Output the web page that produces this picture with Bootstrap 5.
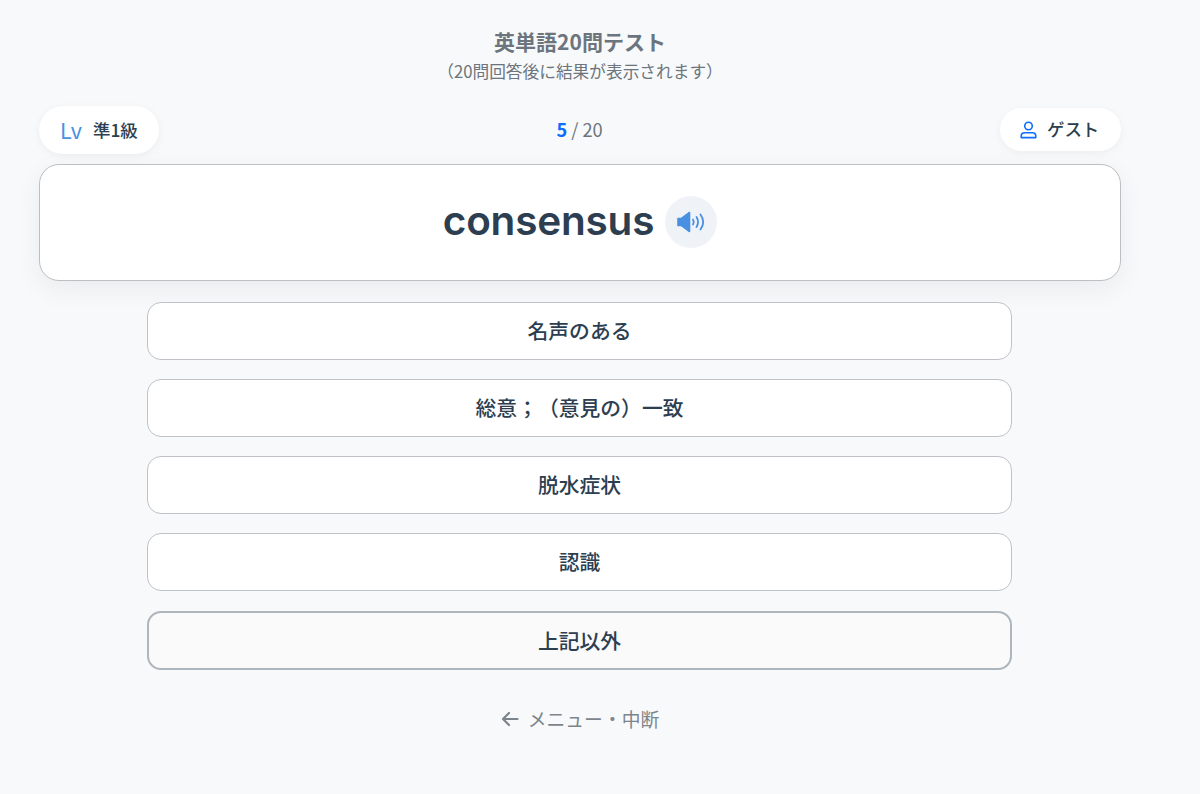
<!DOCTYPE html>
<html lang="ja">
<head>
    <meta charset="utf-8">
    <title>英単語20問テスト</title>
    <link href="https://cdn.jsdelivr.net/npm/bootstrap@5.3.0/dist/css/bootstrap.min.css" rel="stylesheet">
    <style>
        body {
            background: #f8f9fb;
            font-family: "Noto Sans CJK JP", "Noto Sans", sans-serif;
            text-spacing-trim: space-all;
            overflow: hidden;
        }
        .quiz-page { width: 1160px; padding: 27px 39px 0; }
        .quiz-title { font-size: 21px; font-weight: 700; color: #6c757d; line-height: 29px; margin: 0; }
        .quiz-sub { font-size: 16.700px; color: #6c757d; line-height: 22px; margin-top: 4px; }
        .status-row { margin-top: 24px; height: 48px; }
        .pill {
            background: #fff;
            border-radius: 24px;
            box-shadow: 0 2px 8px rgba(0, 0, 0, .05);
            color: #2c3e50;
            font-size: 17.4px;
            font-weight: 500;
        }
        .pill-level { width: 120px; height: 48px; padding-left: 21px; }
        .pill-level .lv { color: #4a90e2; font-size: 21.500px; font-weight: 400; margin-right: 11px; }
        .pill-user { width: 121px; height: 43px; padding-left: 20px; margin-top: 2px; }
        .pill-user svg { margin-right: 10px; }
        .counter { font-size: 18.2px; color: #6c757d; line-height: 46px; }
        .counter b { color: #0d6efd; font-weight: 700; }
        .word-card {
            height: 117px;
            margin-top: 10px;
            padding-bottom: 2px;
            background: #fff;
            border: 1px solid #bdbfc2;
            border-radius: 20px;
            box-shadow: 0 8px 28px rgba(0, 0, 0, .06);
        }
        .word {
            font-family: Inter, "Liberation Sans", sans-serif;
            font-size: 40.500px;
            font-weight: 600;
            color: #2c3e50;
            letter-spacing: -.2px;
        }
        .speak {
            width: 52px;
            height: 52px;
            margin-left: 11px;
            background: #eff3f8;
            border-radius: 50%;
        }
        .choices { width: 865px; margin: 21px 0 0 108px; gap: 19px; }
        .choice {
            height: 58px;
            background: #fff;
            border: 1px solid #bfc2c6;
            border-radius: 14px;
            color: #2c3e50;
            font-size: 20.8px;
            font-weight: 500;
            padding: 0;
        }
        .choice.other {
            height: 59px;
            background: #fafafb;
            border: 2px solid #adb5bd;
            margin-top: 1px;
        }
        .back-link { margin-top: 35px; color: #7d858c; font-size: 18.8px; text-decoration: none; }
        .back-link svg { margin-right: 9px; }
    </style>
</head>
<body>
    <div class="quiz-page">
        <div class="text-center">
            <h1 class="quiz-title">英単語20問テスト</h1>
            <div class="quiz-sub">（20問回答後に結果が表示されます）</div>
        </div>

        <div class="status-row d-flex justify-content-between">
            <div class="pill pill-level d-flex align-items-center"><span class="lv">Lv</span>準1級</div>
            <div class="counter"><b>5</b> / 20</div>
            <div class="pill pill-user d-flex align-items-center">
                <svg width="17" height="18" viewBox="0 0 17 18" fill="none" stroke="#0d6efd" stroke-width="1.6">
                    <circle cx="8.5" cy="5" r="3.8"/>
                    <path d="M1.2 16.6v-1.4c0-2 1.5-3.4 3.4-3.4h7.8c1.9 0 3.4 1.4 3.4 3.4v1.4z" stroke-linejoin="round"/>
                </svg>
                ゲスト
            </div>
        </div>

        <div class="word-card d-flex align-items-center justify-content-center">
            <span class="word">consensus</span>
            <span class="speak d-flex align-items-center justify-content-center">
                <svg width="29" height="22" viewBox="0 0 29 22" fill="none" stroke="#4a90e2" stroke-linecap="round">
                    <path d="M1 7.500h3.500L12.500 1.500v19l-8-6H1z" fill="#4a90e2" stroke-width="1.6" stroke-linejoin="round"/>
                    <path d="M16 8.500c1 1.600 1 3.400 0 5" stroke-width="1.8"/>
                    <path d="M19.500 6c2 3.200 2 6.800 0 10" stroke-width="1.8"/>
                    <path d="M23.500 3.500c3.400 4.700 3.400 10.300 0 15" stroke-width="1.8"/>
                </svg>
            </span>
        </div>

        <div class="choices d-flex flex-column">
            <button type="button" class="btn choice">名声のある</button>
            <button type="button" class="btn choice">総意；（意見の）一致</button>
            <button type="button" class="btn choice">脱水症状</button>
            <button type="button" class="btn choice">認識</button>
            <button type="button" class="btn choice other">上記以外</button>
        </div>

        <div class="text-center">
            <a href="#" class="back-link d-inline-flex align-items-center">
                <svg width="18" height="16" viewBox="0 0 18 16" fill="none" stroke="#7d858c" stroke-width="2.2" stroke-linecap="round" stroke-linejoin="round">
                    <path d="M16.500 8H2M8 2 2 8l6 6"/>
                </svg>
                メニュー・中断
            </a>
        </div>
    </div>

    <script src="https://cdn.jsdelivr.net/npm/bootstrap@5.3.0/dist/js/bootstrap.bundle.min.js"></script>
</body>
</html>
